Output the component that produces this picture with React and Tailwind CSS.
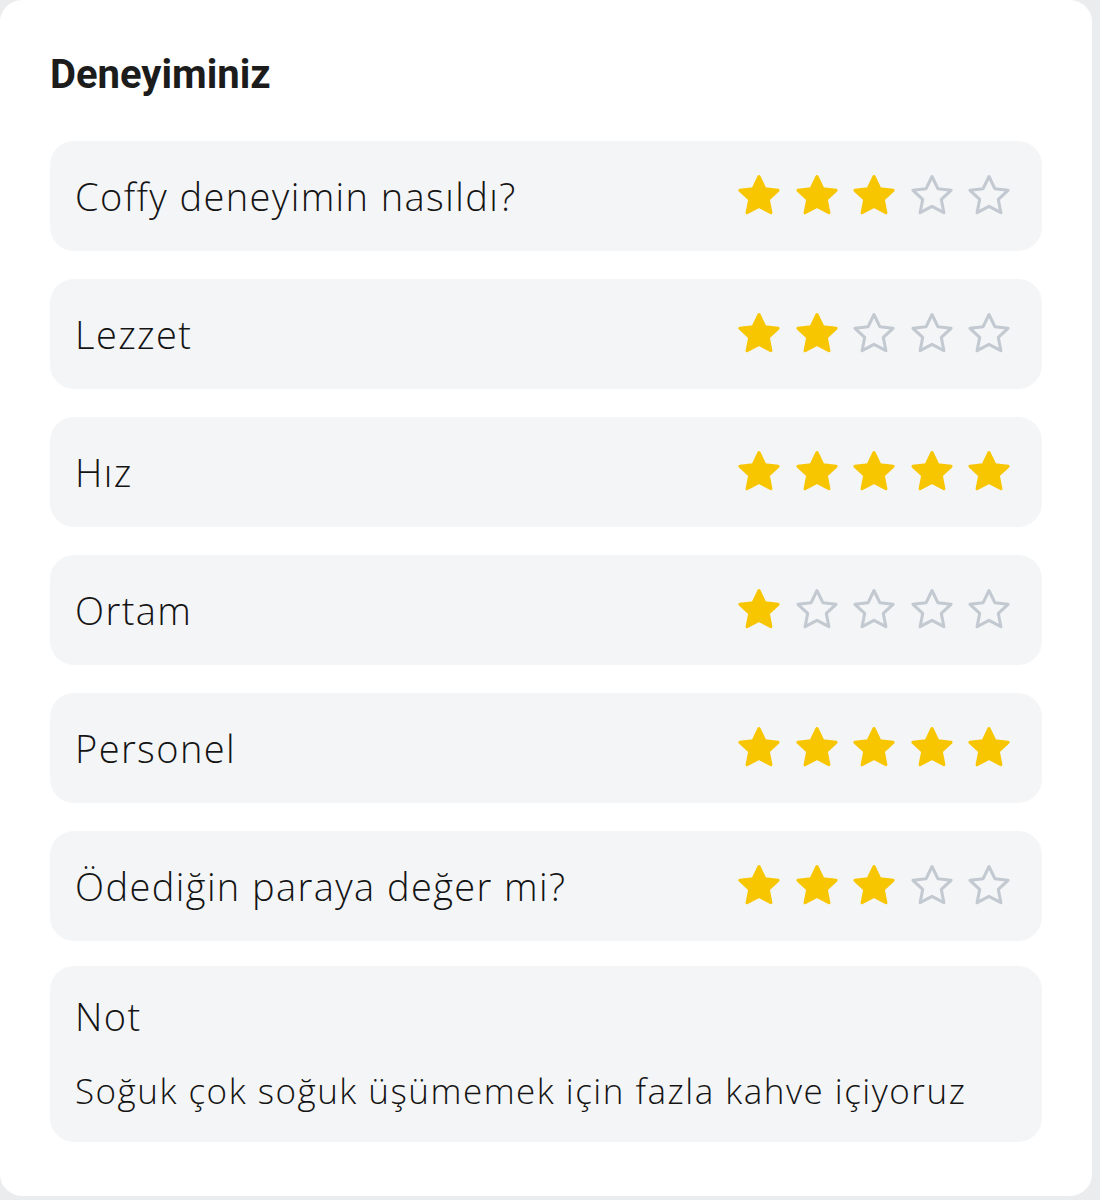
const ratings = [
  { label: 'Coffy deneyimin nasıldı?', value: 3 },
  { label: 'Lezzet', value: 2 },
  { label: 'Hız', value: 5 },
  { label: 'Ortam', value: 1 },
  { label: 'Personel', value: 5 },
  { label: 'Ödediğin paraya değer mi?', value: 3 },
]

function Star({ filled }) {
  return (
    <svg width="52" height="52" viewBox="0 0 24 24" className="shrink-0">
      <polygon
        points="12,3 14.7,8.6 20.8,9.4 16.3,13.6 17.5,19.7 12,16.8 6.5,19.7 7.7,13.6 3.2,9.4 9.3,8.6"
        fill={filled ? '#f7c600' : 'none'}
        stroke={filled ? '#f7c600' : '#c3c9d1'}
        strokeWidth={1.4}
        strokeLinejoin="round"
      />
    </svg>
  )
}

function RatingRow({ label, value }) {
  return (
    <div className="flex h-[110px] items-center justify-between rounded-[24px] bg-[#f4f5f7] pl-[25px] pr-[27px]">
      <p className="text-[38px] font-light leading-[44px] tracking-[1.4px] text-[#141414]">{label}</p>
      <div className="flex items-center gap-[5.5px]">
        {[1, 2, 3, 4, 5].map((n) => (
          <Star key={n} filled={n <= value} />
        ))}
      </div>
    </div>
  )
}

export default function App() {
  return (
    <div className="min-h-[1200px] bg-[#ebecee]" style={{ fontFamily: '"Open Sans", "Noto Sans", sans-serif' }}>
      <div className="h-[1196px] w-[1092px] rounded-[22px] bg-white px-[50px] pt-[55px]">
        <h1 className="text-[40px] font-bold leading-none text-[#1c1c1c]" style={{ fontFamily: 'Roboto, sans-serif' }}>
          Deneyiminiz
        </h1>
        <div className="mt-[46px] flex flex-col gap-[28px]">
          {ratings.map((r) => (
            <RatingRow key={r.label} {...r} />
          ))}
          <div className="-mt-[3px] rounded-[24px] bg-[#f4f5f7] px-[25px] pb-[30px] pt-[28px] font-light text-[#141414]">
            <p className="text-[38px] leading-[44px] tracking-[1.4px]">Not</p>
            <p className="mt-[32px] text-[35px] leading-[42px] tracking-[1.5px]">Soğuk çok soğuk üşümemek için fazla kahve içiyoruz</p>
          </div>
        </div>
      </div>
    </div>
  )
}
